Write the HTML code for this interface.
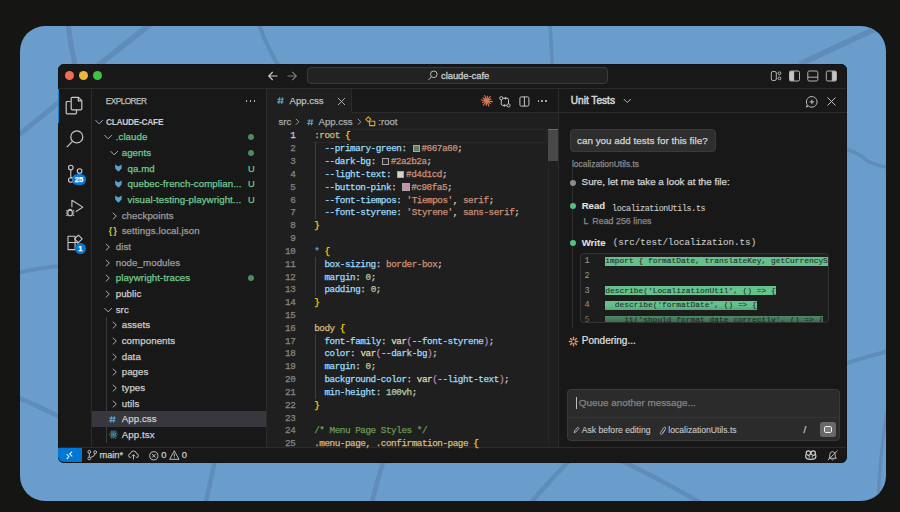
<!DOCTYPE html><html><head><meta charset="utf-8"><style>*{box-sizing:border-box;margin:0;padding:0}
html,body{width:900px;height:512px;overflow:hidden;background:#151513;font-family:"Liberation Sans",sans-serif;color:#cccccc;position:relative}
.a{position:absolute;white-space:pre;-webkit-text-stroke:0.25px currentColor}
svg{position:absolute;overflow:visible}
.m{font-family:"Liberation Mono",monospace}
.sel{color:#d7ba7d}.br{color:#ffd700}.pr{color:#9cdcfe}.st{color:#ce9178}.nu{color:#b5cea8}.fn{color:#dcdcaa}.pa{color:#c586c0}.kw{color:#569cd6}.cm{color:#6a9955}.pu{color:#cccccc}
</style></head><body>
<div class="a" style="left:20px;top:26px;width:865.5px;height:474.5px;border-radius:25px;background:#6a9ccc;overflow:hidden"><svg width="866" height="475" style="left:0;top:0" fill="none" stroke="#5f8cb9" stroke-linecap="butt"><g transform="translate(-20 -26)"><path d="M67.5 20 Q70.5 45 76 70" stroke-width="5"/><path d="M160 16.5 L92 70.4" stroke-width="5.5"/><path d="M64 98.1 L14 139" stroke-width="5"/><path d="M257.5 20 Q265 44 281 70" stroke-width="4"/><path d="M550 20 Q551 45 552.5 70" stroke-width="3.5"/><path d="M890 22 L800 64" stroke-width="5.5"/><path d="M14 274 Q36 268 62 266" stroke-width="4"/><path d="M14 396 Q36 405 62 418" stroke-width="4.5"/><path d="M216 456 L205 506" stroke-width="4.5"/><path d="M385 456 Q378 478 371 506" stroke-width="4.5"/><path d="M574 456 Q552 478 528 506" stroke-width="4.5"/><path d="M612 456 Q662 480 706 506" stroke-width="4.5"/><path d="M842 148 Q858 152 866 160 Q876 166 892 168" stroke-width="3.5"/><path d="M842 364.5 Q866 357 892 350" stroke-width="4"/><path d="M887 412 Q880 450 878 505" stroke-width="3"/></g></svg></div>
<div class="a" style="left:58px;top:64px;width:789px;height:398.5px;border-radius:6px;background:#181818;overflow:hidden"></div>
<div class="a" style="left:267px;top:89px;width:291px;height:358px;background:#1f1f1f"></div>
<div class="a" style="left:58px;top:88px;width:789px;height:1px;background:#2b2b2b"></div>
<div class="a" style="left:91px;top:89px;width:1px;height:358px;background:#2b2b2b"></div>
<div class="a" style="left:266px;top:89px;width:1px;height:358px;background:#2b2b2b"></div>
<div class="a" style="left:558px;top:89px;width:1px;height:358px;background:#2b2b2b"></div>
<div class="a" style="left:58px;top:447px;width:789px;height:1px;background:#2b2b2b"></div>
<div class="a" style="left:58px;top:64px;width:789px;height:398.5px;border-radius:6px;border:1px solid #131313"></div>
<div class="a" style="left:64.9px;top:71.2px;width:9px;height:9px;border-radius:50%;background:#ef6e54"></div>
<div class="a" style="left:79.2px;top:71.2px;width:9px;height:9px;border-radius:50%;background:#efb63b"></div>
<div class="a" style="left:93.2px;top:71.2px;width:9px;height:9px;border-radius:50%;background:#3ec245"></div>
<svg style="left:268px;top:71px" width="10" height="10" fill="none" stroke="#cccccc" stroke-width="1.1"><path d="M9.5 5H0.7M4.7 1L0.7 5L4.7 9"/></svg>
<svg style="left:286.5px;top:71px" width="10" height="10" fill="none" stroke="#7a7a7a" stroke-width="1.1"><path d="M0.5 5H9.3M5.3 1L9.3 5L5.3 9"/></svg>
<div class="a" style="left:306.5px;top:67px;width:301.5px;height:17px;border-radius:4px;background:#222222;border:1px solid #3a3a3a"></div>
<svg style="left:428px;top:70px" width="10" height="11" fill="none" stroke="#bbbbbb" stroke-width="1"><circle cx="5.8" cy="4.3" r="3.3"/><path d="M3.4 6.8L0.6 9.9"/></svg>
<div class="a" style="left:441px;top:69.20px;height:14px;line-height:14px;font-size:9.45px;color:#cccccc;font-weight:normal;font-family:'Liberation Sans';-webkit-text-stroke:0.3px #cccccc;letter-spacing:-0.05px;">claude-cafe</div>
<svg style="left:770px;top:70px" width="70" height="12" fill="none" stroke="#c5c5c5" stroke-width="0.9"><rect x="1.3" y="1.5" width="5" height="9" rx="1.5"/><circle cx="9.5" cy="3.3" r="1.4"/><circle cx="9.5" cy="8.3" r="1.4"/><rect x="19.5" y="1" width="10" height="10" rx="1.5"/><rect x="19.8" y="1.3" width="4" height="9.4" fill="#c5c5c5" stroke="none"/><path d="M23.7 1V11"/><rect x="37.8" y="1" width="10" height="10" rx="1.5"/><path d="M37.8 7.2H47.8"/><rect x="56.3" y="1" width="10" height="10" rx="1.5"/><rect x="62.3" y="1.3" width="4" height="9.4" fill="#c5c5c5" stroke="none"/><path d="M62.3 1V11"/></svg>
<div class="a" style="left:58px;top:88.6px;width:1.1px;height:34px;background:#1a7fd0"></div>
<svg style="left:65px;top:96px" width="20" height="20" fill="none" stroke="#c8c8c8" stroke-width="1.2" stroke-linejoin="round"><path d="M5.5 5.5H2.2Q1.2 5.5 1.2 6.5V16.8Q1.2 17.8 2.2 17.8H10.5Q11.5 17.8 11.5 16.8V13.8"/><path d="M6.2 2.3Q6.2 1.3 7.2 1.3H13.5L16.8 4.6V12.8Q16.8 13.8 15.8 13.8H7.2Q6.2 13.8 6.2 12.8Z"/><path d="M13.3 1.3V4.8H16.8"/></svg>
<svg style="left:65px;top:129px" width="20" height="20" fill="none" stroke="#c8c8c8" stroke-width="1.2"><circle cx="11.8" cy="7.9" r="6"/><path d="M7.5 12.3L1.8 18.2"/></svg>
<svg style="left:65.7px;top:163.3px" width="20" height="20" fill="none" stroke="#c8c8c8" stroke-width="1.1"><circle cx="4.8" cy="4.6" r="2.3"/><circle cx="13.6" cy="8" r="2.3"/><circle cx="4.8" cy="17" r="2.3"/><path d="M4.8 6.9V14.7M13.6 10.3Q13.6 13 9 14Q5.5 14.6 4.8 14.8"/></svg>
<div class="a" style="left:71.8px;top:173.8px;width:14.2px;height:11.4px;border-radius:5.7px;background:#0b7ad6;color:#fff;font-size:7.6px;font-weight:bold;text-align:center;line-height:11.4px">25</div>
<svg style="left:65px;top:197.8px" width="20" height="20" fill="none" stroke="#c8c8c8" stroke-width="1.1" stroke-linejoin="round"><path d="M6.9 9.3V2.3L17.8 9.1L10.7 13.7"/><ellipse cx="5.1" cy="15" rx="2.3" ry="2.8"/><path d="M3.2 12.3Q5.1 10.2 7 12.3M1.1 12.5L2.8 13.3M0.9 15H2.7M1.1 17.6L2.8 16.7M9.1 12.5L7.4 13.3M9.3 15H7.5M9.1 17.6L7.4 16.7"/></svg>
<svg style="left:65px;top:232px" width="20" height="20" fill="none" stroke="#c8c8c8" stroke-width="1.1" stroke-linejoin="round"><path d="M3 4.2H10.1V17.6H3ZM3 10.5H10.1M10.1 10.5H13V17.6H10.1"/><path d="M13.4 3.1L17.2 6.9L13.4 10.7L9.6 6.9Z"/></svg>
<div class="a" style="left:74.8px;top:242.5px;width:11px;height:11px;border-radius:50%;background:#0078d4;color:#fff;font-size:7.5px;font-weight:bold;text-align:center;line-height:11px">1</div>
<div class="a" style="left:105.7px;top:94.30px;height:14px;line-height:14px;font-size:8.3px;color:#bdbdbd;font-weight:normal;font-family:'Liberation Sans';letter-spacing:-0.55px;">EXPLORER</div>
<div class="a" style="left:245.6px;top:100.2px;width:1.8px;height:1.8px;border-radius:50%;background:#d0d0d0"></div>
<div class="a" style="left:249.6px;top:100.2px;width:1.8px;height:1.8px;border-radius:50%;background:#d0d0d0"></div>
<div class="a" style="left:253.6px;top:100.2px;width:1.8px;height:1.8px;border-radius:50%;background:#d0d0d0"></div>
<div class="a" style="left:106px;top:114.50px;height:14px;line-height:14px;font-size:8.4px;color:#cccccc;font-weight:bold;font-family:'Liberation Sans';-webkit-text-stroke:0.05px currentColor;letter-spacing:-0.3px;">CLAUDE-CAFE</div>
<svg style="left:94.5px;top:117.50px" width="9" height="8" fill="none" stroke="#c5c5c5" stroke-width="0.85"><path d="M0.5 2.1L4.2 5.8L7.9 2.1"/></svg>
<div class="a" style="left:115.7px;top:130.17px;height:14px;line-height:14px;font-size:9.7px;color:#73c991;font-weight:normal;font-family:'Liberation Sans';letter-spacing:0.08px;">.claude</div>
<svg style="left:104px;top:133.17px" width="9" height="8" fill="none" stroke="#c5c5c5" stroke-width="0.85"><path d="M0.5 2.1L4.2 5.8L7.9 2.1"/></svg>
<div class="a" style="left:248.1px;top:134.17px;width:6px;height:6px;border-radius:50%;background:#4f8a60"></div>
<div class="a" style="left:121.7px;top:145.84px;height:14px;line-height:14px;font-size:9.7px;color:#73c991;font-weight:normal;font-family:'Liberation Sans';letter-spacing:0.08px;">agents</div>
<svg style="left:109.8px;top:148.84px" width="9" height="8" fill="none" stroke="#c5c5c5" stroke-width="0.85"><path d="M0.5 2.1L4.2 5.8L7.9 2.1"/></svg>
<div class="a" style="left:248.1px;top:149.84px;width:6px;height:6px;border-radius:50%;background:#4f8a60"></div>
<div class="a" style="left:127.5px;top:161.51px;height:14px;line-height:14px;font-size:9.7px;color:#73c991;font-weight:normal;font-family:'Liberation Sans';letter-spacing:0.08px;">qa.md</div>
<svg style="left:115.2px;top:164.11px" width="8" height="8" fill="#5aa3cf"><path d="M0.2 0.4L3.4 2.6L6.6 0.4V4.4L3.4 7.8L0.2 4.4Z"/></svg>
<div class="a" style="left:248px;top:161.51px;height:14px;line-height:14px;font-size:9.3px;color:#73c991;font-weight:normal;font-family:'Liberation Sans';">U</div>
<div class="a" style="left:127.5px;top:177.18px;height:14px;line-height:14px;font-size:9.7px;color:#73c991;font-weight:normal;font-family:'Liberation Sans';letter-spacing:0.08px;">quebec-french-complian...</div>
<svg style="left:115.2px;top:179.78px" width="8" height="8" fill="#5aa3cf"><path d="M0.2 0.4L3.4 2.6L6.6 0.4V4.4L3.4 7.8L0.2 4.4Z"/></svg>
<div class="a" style="left:248px;top:177.18px;height:14px;line-height:14px;font-size:9.3px;color:#73c991;font-weight:normal;font-family:'Liberation Sans';">U</div>
<div class="a" style="left:127.5px;top:192.85px;height:14px;line-height:14px;font-size:9.7px;color:#73c991;font-weight:normal;font-family:'Liberation Sans';letter-spacing:0.08px;">visual-testing-playwright...</div>
<svg style="left:115.2px;top:195.45px" width="8" height="8" fill="#5aa3cf"><path d="M0.2 0.4L3.4 2.6L6.6 0.4V4.4L3.4 7.8L0.2 4.4Z"/></svg>
<div class="a" style="left:248px;top:192.85px;height:14px;line-height:14px;font-size:9.3px;color:#73c991;font-weight:normal;font-family:'Liberation Sans';">U</div>
<div class="a" style="left:121.7px;top:208.52px;height:14px;line-height:14px;font-size:9.7px;color:#9d9d9d;font-weight:normal;font-family:'Liberation Sans';letter-spacing:0.08px;">checkpoints</div>
<svg style="left:110.6px;top:211.52px" width="8" height="8" fill="none" stroke="#c5c5c5" stroke-width="0.85"><path d="M1.8 0.8L5.3 4.1L1.8 7.4"/></svg>
<div class="a" style="left:121.7px;top:224.19px;height:14px;line-height:14px;font-size:9.7px;color:#9d9d9d;font-weight:normal;font-family:'Liberation Sans';letter-spacing:0.08px;">settings.local.json</div>
<div class="a" style="left:108.8px;top:224.19px;height:14px;line-height:14px;font-size:8.5px;color:#cbcb41;font-weight:bold;font-family:'Liberation Sans';-webkit-text-stroke:0.05px currentColor;letter-spacing:-0.5px;">{ }</div>
<div class="a" style="left:115.7px;top:239.86px;height:14px;line-height:14px;font-size:9.7px;color:#9d9d9d;font-weight:normal;font-family:'Liberation Sans';letter-spacing:0.08px;">dist</div>
<svg style="left:104px;top:242.86px" width="8" height="8" fill="none" stroke="#c5c5c5" stroke-width="0.85"><path d="M1.8 0.8L5.3 4.1L1.8 7.4"/></svg>
<div class="a" style="left:115.7px;top:255.53px;height:14px;line-height:14px;font-size:9.7px;color:#9d9d9d;font-weight:normal;font-family:'Liberation Sans';letter-spacing:0.08px;">node_modules</div>
<svg style="left:104px;top:258.53px" width="8" height="8" fill="none" stroke="#c5c5c5" stroke-width="0.85"><path d="M1.8 0.8L5.3 4.1L1.8 7.4"/></svg>
<div class="a" style="left:115.7px;top:271.20px;height:14px;line-height:14px;font-size:9.7px;color:#73c991;font-weight:normal;font-family:'Liberation Sans';letter-spacing:0.08px;">playwright-traces</div>
<svg style="left:104px;top:274.20px" width="8" height="8" fill="none" stroke="#c5c5c5" stroke-width="0.85"><path d="M1.8 0.8L5.3 4.1L1.8 7.4"/></svg>
<div class="a" style="left:248.1px;top:275.20px;width:6px;height:6px;border-radius:50%;background:#4f8a60"></div>
<div class="a" style="left:115.7px;top:286.87px;height:14px;line-height:14px;font-size:9.7px;color:#cccccc;font-weight:normal;font-family:'Liberation Sans';letter-spacing:0.08px;">public</div>
<svg style="left:104px;top:289.87px" width="8" height="8" fill="none" stroke="#c5c5c5" stroke-width="0.85"><path d="M1.8 0.8L5.3 4.1L1.8 7.4"/></svg>
<div class="a" style="left:115.7px;top:302.54px;height:14px;line-height:14px;font-size:9.7px;color:#cccccc;font-weight:normal;font-family:'Liberation Sans';letter-spacing:0.08px;">src</div>
<svg style="left:104px;top:305.54px" width="9" height="8" fill="none" stroke="#c5c5c5" stroke-width="0.85"><path d="M0.5 2.1L4.2 5.8L7.9 2.1"/></svg>
<div class="a" style="left:121.7px;top:318.21px;height:14px;line-height:14px;font-size:9.7px;color:#cccccc;font-weight:normal;font-family:'Liberation Sans';letter-spacing:0.08px;">assets</div>
<svg style="left:110.5px;top:321.21px" width="8" height="8" fill="none" stroke="#c5c5c5" stroke-width="0.85"><path d="M1.8 0.8L5.3 4.1L1.8 7.4"/></svg>
<div class="a" style="left:121.7px;top:333.88px;height:14px;line-height:14px;font-size:9.7px;color:#cccccc;font-weight:normal;font-family:'Liberation Sans';letter-spacing:0.08px;">components</div>
<svg style="left:110.5px;top:336.88px" width="8" height="8" fill="none" stroke="#c5c5c5" stroke-width="0.85"><path d="M1.8 0.8L5.3 4.1L1.8 7.4"/></svg>
<div class="a" style="left:121.7px;top:349.55px;height:14px;line-height:14px;font-size:9.7px;color:#cccccc;font-weight:normal;font-family:'Liberation Sans';letter-spacing:0.08px;">data</div>
<svg style="left:110.5px;top:352.55px" width="8" height="8" fill="none" stroke="#c5c5c5" stroke-width="0.85"><path d="M1.8 0.8L5.3 4.1L1.8 7.4"/></svg>
<div class="a" style="left:121.7px;top:365.22px;height:14px;line-height:14px;font-size:9.7px;color:#cccccc;font-weight:normal;font-family:'Liberation Sans';letter-spacing:0.08px;">pages</div>
<svg style="left:110.5px;top:368.22px" width="8" height="8" fill="none" stroke="#c5c5c5" stroke-width="0.85"><path d="M1.8 0.8L5.3 4.1L1.8 7.4"/></svg>
<div class="a" style="left:121.7px;top:380.89px;height:14px;line-height:14px;font-size:9.7px;color:#cccccc;font-weight:normal;font-family:'Liberation Sans';letter-spacing:0.08px;">types</div>
<svg style="left:110.5px;top:383.89px" width="8" height="8" fill="none" stroke="#c5c5c5" stroke-width="0.85"><path d="M1.8 0.8L5.3 4.1L1.8 7.4"/></svg>
<div class="a" style="left:121.7px;top:396.56px;height:14px;line-height:14px;font-size:9.7px;color:#cccccc;font-weight:normal;font-family:'Liberation Sans';letter-spacing:0.08px;">utils</div>
<svg style="left:110.5px;top:399.56px" width="8" height="8" fill="none" stroke="#c5c5c5" stroke-width="0.85"><path d="M1.8 0.8L5.3 4.1L1.8 7.4"/></svg>
<div class="a" style="left:92px;top:411.33px;width:174px;height:15.8px;background:#37373d"></div>
<div class="a" style="left:121.7px;top:412.23px;height:14px;line-height:14px;font-size:9.7px;color:#cccccc;font-weight:normal;font-family:'Liberation Sans';letter-spacing:0.08px;">App.css</div>
<svg style="left:109.3px;top:415.83000000000004px" width="6.8" height="6.8" fill="none" stroke="#5aa3cf" stroke-width="1.15"><g transform="scale(0.971)"><path d="M2.6 0.3L1.7 6.8M5.5 0.3L4.6 6.8M0.4 2.2H6.8M0.1 4.8H6.5"/></g></svg>
<div class="a" style="left:121.7px;top:427.90px;height:14px;line-height:14px;font-size:9.7px;color:#cccccc;font-weight:normal;font-family:'Liberation Sans';letter-spacing:0.08px;">App.tsx</div>
<svg style="left:108.5px;top:430.40px" width="9" height="9" fill="none" stroke="#519aba" stroke-width="0.6"><ellipse cx="4.5" cy="4.5" rx="4.2" ry="1.6"/><ellipse cx="4.5" cy="4.5" rx="4.2" ry="1.6" transform="rotate(60 4.5 4.5)"/><ellipse cx="4.5" cy="4.5" rx="4.2" ry="1.6" transform="rotate(-60 4.5 4.5)"/><circle cx="4.5" cy="4.5" r="0.8" fill="#519aba"/></svg>
<div class="a" style="left:105.7px;top:317.38px;width:1px;height:125.36px;background:#3a3a3a"></div>
<div class="a" style="left:267px;top:89px;width:291px;height:24px;background:#181818;border-bottom:1px solid #2b2b2b"></div>
<div class="a" style="left:267px;top:89px;width:85px;height:24px;background:#1f1f1f;border-right:1px solid #2b2b2b"></div>
<svg style="left:277.4px;top:97.1px" width="7" height="7" fill="none" stroke="#5aa3cf" stroke-width="1.15"><g transform="scale(1.000)"><path d="M2.6 0.3L1.7 6.8M5.5 0.3L4.6 6.8M0.4 2.2H6.8M0.1 4.8H6.5"/></g></svg>
<div class="a" style="left:289.5px;top:93.90px;height:14px;line-height:14px;font-size:9.6px;color:#bdbdbd;font-weight:normal;font-family:'Liberation Sans';">App.css</div>
<svg style="left:337px;top:97px" width="9" height="9" fill="none" stroke="#bdbdbd" stroke-width="0.9"><path d="M1 1L8 8M8 1L1 8"/></svg>
<svg style="left:480.7px;top:95.2px" width="12" height="12" fill="none" stroke="#d97757" stroke-width="1.15" stroke-linecap="round"><path d="M6.99 5.97L11.35 6.58M6.75 6.54L9.42 8.63M6.25 6.91L7.90 10.99M5.63 6.99L5.16 10.36M5.06 6.75L2.35 10.21M4.69 6.25L1.53 7.52M4.61 5.63L0.25 5.02M4.85 5.06L2.18 2.97M5.35 4.69L3.70 0.61M5.97 4.61L6.44 1.24M6.54 4.85L9.25 1.39M6.91 5.35L10.07 4.08"/><circle cx="5.8" cy="5.8" r="1.6" fill="#d97757" stroke="none"/></svg>
<svg style="left:497px;top:94px" width="16" height="16" fill="none" stroke="#c5c5c5" stroke-width="1"><circle cx="4.3" cy="4.2" r="1.6"/><circle cx="11.5" cy="11.4" r="1.6"/><path d="M4.3 5.8V10Q4.3 11.4 5.7 11.4H9.9"/><path d="M11.5 9.8V5.6Q11.5 4.2 10.1 4.2H5.9"/><path d="M8.5 2.7L9.6 4.2L8.5 5.7L7.4 4.2Z M7.3 9.9L8.4 11.4L7.3 12.9L6.2 11.4Z" fill="#c5c5c5" stroke="none"/></svg>
<svg style="left:518.5px;top:96px" width="11" height="11" fill="none" stroke="#c5c5c5" stroke-width="1"><rect x="0.9" y="0.9" width="9" height="9.2" rx="1.3"/><path d="M5.4 0.9V10.1"/></svg>
<div class="a" style="left:537.6px;top:100.4px;width:1.8px;height:1.8px;border-radius:50%;background:#d0d0d0"></div>
<div class="a" style="left:541.4px;top:100.4px;width:1.8px;height:1.8px;border-radius:50%;background:#d0d0d0"></div>
<div class="a" style="left:545.2px;top:100.4px;width:1.8px;height:1.8px;border-radius:50%;background:#d0d0d0"></div>
<div class="a" style="left:278.5px;top:114.80px;height:14px;line-height:14px;font-size:9.6px;color:#a9a9a9;font-weight:normal;font-family:'Liberation Sans';">src</div>
<svg style="left:293.5px;top:118px" width="7" height="8" fill="none" stroke="#a9a9a9" stroke-width="0.9"><path d="M1.8 0.8L4.8 3.8L1.8 6.8"/></svg>
<svg style="left:307.1px;top:118.6px" width="6.5" height="6.5" fill="none" stroke="#5aa3cf" stroke-width="1.15"><g transform="scale(0.929)"><path d="M2.6 0.3L1.7 6.8M5.5 0.3L4.6 6.8M0.4 2.2H6.8M0.1 4.8H6.5"/></g></svg>
<div class="a" style="left:318.5px;top:114.80px;height:14px;line-height:14px;font-size:9.6px;color:#a9a9a9;font-weight:normal;font-family:'Liberation Sans';">App.css</div>
<svg style="left:355.5px;top:118px" width="7" height="8" fill="none" stroke="#a9a9a9" stroke-width="0.9"><path d="M1.8 0.8L4.8 3.8L1.8 6.8"/></svg>
<svg style="left:364.5px;top:115.5px" width="12" height="12" fill="none" stroke="#e0a030" stroke-width="1.1" stroke-linejoin="round"><path d="M3.3 0.9L5.8 3.4L3.3 5.9L0.8 3.4Z"/><path d="M4.6 4.7V9.6H9.8V5.2H5.5"/></svg>
<div class="a" style="left:378.3px;top:114.80px;height:14px;line-height:14px;font-size:9.6px;color:#a9a9a9;font-weight:normal;font-family:'Liberation Sans';">:root</div>
<div class="a" style="left:313px;top:128.79px;width:234px;height:13.82px;border:1px solid #282828;border-left:none"></div>
<div class="a m" style="left:265.3px;top:130.49px;width:30px;text-align:right;font-size:9.30px;letter-spacing:-0.450px;line-height:12.82px;height:12.82px;color:#cccccc">1</div>
<div class="a m" style="left:314.2px;top:130.49px;font-size:9.30px;letter-spacing:-0.450px;line-height:12.82px;height:12.82px;color:#cccccc"><span class="sel">:root</span><span class="pu"> </span><span class="br">{</span></div>
<div class="a m" style="left:265.3px;top:143.31px;width:30px;text-align:right;font-size:9.30px;letter-spacing:-0.450px;line-height:12.82px;height:12.82px;color:#858585">2</div>
<div class="a" style="left:412.67px;top:144.92px;width:7.2px;height:7.2px;border:1px solid #a8a8a8;background:#667a60"></div>
<div class="a m" style="left:314.2px;top:143.31px;font-size:9.30px;letter-spacing:-0.450px;line-height:12.82px;height:12.82px;color:#cccccc"><span class="pu">  </span><span class="pr">--primary-green</span><span class="pu">: </span><span style="display:inline-block;width:9.75px"></span><span class="st">#667a60</span><span class="pu">;</span></div>
<div class="a m" style="left:265.3px;top:156.13px;width:30px;text-align:right;font-size:9.30px;letter-spacing:-0.450px;line-height:12.82px;height:12.82px;color:#858585">3</div>
<div class="a" style="left:381.89px;top:157.74px;width:7.2px;height:7.2px;border:1px solid #a8a8a8;background:#2a2b2a"></div>
<div class="a m" style="left:314.2px;top:156.13px;font-size:9.30px;letter-spacing:-0.450px;line-height:12.82px;height:12.82px;color:#cccccc"><span class="pu">  </span><span class="pr">--dark-bg</span><span class="pu">: </span><span style="display:inline-block;width:9.75px"></span><span class="st">#2a2b2a</span><span class="pu">;</span></div>
<div class="a m" style="left:265.3px;top:168.95px;width:30px;text-align:right;font-size:9.30px;letter-spacing:-0.450px;line-height:12.82px;height:12.82px;color:#858585">4</div>
<div class="a" style="left:397.28px;top:170.56px;width:7.2px;height:7.2px;border:1px solid #a8a8a8;background:#d4d1cd"></div>
<div class="a m" style="left:314.2px;top:168.95px;font-size:9.30px;letter-spacing:-0.450px;line-height:12.82px;height:12.82px;color:#cccccc"><span class="pu">  </span><span class="pr">--light-text</span><span class="pu">: </span><span style="display:inline-block;width:9.75px"></span><span class="st">#d4d1cd</span><span class="pu">;</span></div>
<div class="a m" style="left:265.3px;top:181.77px;width:30px;text-align:right;font-size:9.30px;letter-spacing:-0.450px;line-height:12.82px;height:12.82px;color:#858585">5</div>
<div class="a" style="left:402.41px;top:183.38px;width:7.2px;height:7.2px;border:1px solid #a8a8a8;background:#c98fa5"></div>
<div class="a m" style="left:314.2px;top:181.77px;font-size:9.30px;letter-spacing:-0.450px;line-height:12.82px;height:12.82px;color:#cccccc"><span class="pu">  </span><span class="pr">--button-pink</span><span class="pu">: </span><span style="display:inline-block;width:9.75px"></span><span class="st">#c98fa5</span><span class="pu">;</span></div>
<div class="a m" style="left:265.3px;top:194.59px;width:30px;text-align:right;font-size:9.30px;letter-spacing:-0.450px;line-height:12.82px;height:12.82px;color:#858585">6</div>
<div class="a m" style="left:314.2px;top:194.59px;font-size:9.30px;letter-spacing:-0.450px;line-height:12.82px;height:12.82px;color:#cccccc"><span class="pu">  </span><span class="pr">--font-tiempos</span><span class="pu">: </span><span class="st">&#x27;Tiempos&#x27;</span><span class="pu">, </span><span class="st">serif</span><span class="pu">;</span></div>
<div class="a m" style="left:265.3px;top:207.41px;width:30px;text-align:right;font-size:9.30px;letter-spacing:-0.450px;line-height:12.82px;height:12.82px;color:#858585">7</div>
<div class="a m" style="left:314.2px;top:207.41px;font-size:9.30px;letter-spacing:-0.450px;line-height:12.82px;height:12.82px;color:#cccccc"><span class="pu">  </span><span class="pr">--font-styrene</span><span class="pu">: </span><span class="st">&#x27;Styrene&#x27;</span><span class="pu">, </span><span class="st">sans-serif</span><span class="pu">;</span></div>
<div class="a m" style="left:265.3px;top:220.23px;width:30px;text-align:right;font-size:9.30px;letter-spacing:-0.450px;line-height:12.82px;height:12.82px;color:#858585">8</div>
<div class="a m" style="left:314.2px;top:220.23px;font-size:9.30px;letter-spacing:-0.450px;line-height:12.82px;height:12.82px;color:#cccccc"><span class="br">}</span></div>
<div class="a m" style="left:265.3px;top:233.05px;width:30px;text-align:right;font-size:9.30px;letter-spacing:-0.450px;line-height:12.82px;height:12.82px;color:#858585">9</div>
<div class="a m" style="left:314.2px;top:233.05px;font-size:9.30px;letter-spacing:-0.450px;line-height:12.82px;height:12.82px;color:#cccccc"></div>
<div class="a m" style="left:265.3px;top:245.87px;width:30px;text-align:right;font-size:9.30px;letter-spacing:-0.450px;line-height:12.82px;height:12.82px;color:#858585">10</div>
<div class="a m" style="left:314.2px;top:245.87px;font-size:9.30px;letter-spacing:-0.450px;line-height:12.82px;height:12.82px;color:#cccccc"><span class="kw">*</span><span class="pu"> </span><span class="br">{</span></div>
<div class="a m" style="left:265.3px;top:258.69px;width:30px;text-align:right;font-size:9.30px;letter-spacing:-0.450px;line-height:12.82px;height:12.82px;color:#858585">11</div>
<div class="a m" style="left:314.2px;top:258.69px;font-size:9.30px;letter-spacing:-0.450px;line-height:12.82px;height:12.82px;color:#cccccc"><span class="pu">  </span><span class="pr">box-sizing</span><span class="pu">: </span><span class="st">border-box</span><span class="pu">;</span></div>
<div class="a m" style="left:265.3px;top:271.51px;width:30px;text-align:right;font-size:9.30px;letter-spacing:-0.450px;line-height:12.82px;height:12.82px;color:#858585">12</div>
<div class="a m" style="left:314.2px;top:271.51px;font-size:9.30px;letter-spacing:-0.450px;line-height:12.82px;height:12.82px;color:#cccccc"><span class="pu">  </span><span class="pr">margin</span><span class="pu">: </span><span class="nu">0</span><span class="pu">;</span></div>
<div class="a m" style="left:265.3px;top:284.33px;width:30px;text-align:right;font-size:9.30px;letter-spacing:-0.450px;line-height:12.82px;height:12.82px;color:#858585">13</div>
<div class="a m" style="left:314.2px;top:284.33px;font-size:9.30px;letter-spacing:-0.450px;line-height:12.82px;height:12.82px;color:#cccccc"><span class="pu">  </span><span class="pr">padding</span><span class="pu">: </span><span class="nu">0</span><span class="pu">;</span></div>
<div class="a m" style="left:265.3px;top:297.15px;width:30px;text-align:right;font-size:9.30px;letter-spacing:-0.450px;line-height:12.82px;height:12.82px;color:#858585">14</div>
<div class="a m" style="left:314.2px;top:297.15px;font-size:9.30px;letter-spacing:-0.450px;line-height:12.82px;height:12.82px;color:#cccccc"><span class="br">}</span></div>
<div class="a m" style="left:265.3px;top:309.97px;width:30px;text-align:right;font-size:9.30px;letter-spacing:-0.450px;line-height:12.82px;height:12.82px;color:#858585">15</div>
<div class="a m" style="left:314.2px;top:309.97px;font-size:9.30px;letter-spacing:-0.450px;line-height:12.82px;height:12.82px;color:#cccccc"></div>
<div class="a m" style="left:265.3px;top:322.79px;width:30px;text-align:right;font-size:9.30px;letter-spacing:-0.450px;line-height:12.82px;height:12.82px;color:#858585">16</div>
<div class="a m" style="left:314.2px;top:322.79px;font-size:9.30px;letter-spacing:-0.450px;line-height:12.82px;height:12.82px;color:#cccccc"><span class="sel">body</span><span class="pu"> </span><span class="br">{</span></div>
<div class="a m" style="left:265.3px;top:335.61px;width:30px;text-align:right;font-size:9.30px;letter-spacing:-0.450px;line-height:12.82px;height:12.82px;color:#858585">17</div>
<div class="a m" style="left:314.2px;top:335.61px;font-size:9.30px;letter-spacing:-0.450px;line-height:12.82px;height:12.82px;color:#cccccc"><span class="pu">  </span><span class="pr">font-family</span><span class="pu">: </span><span class="fn">var</span><span class="pa">(</span><span class="pr">--font-styrene</span><span class="pa">)</span><span class="pu">;</span></div>
<div class="a m" style="left:265.3px;top:348.43px;width:30px;text-align:right;font-size:9.30px;letter-spacing:-0.450px;line-height:12.82px;height:12.82px;color:#858585">18</div>
<div class="a m" style="left:314.2px;top:348.43px;font-size:9.30px;letter-spacing:-0.450px;line-height:12.82px;height:12.82px;color:#cccccc"><span class="pu">  </span><span class="pr">color</span><span class="pu">: </span><span class="fn">var</span><span class="pa">(</span><span class="pr">--dark-bg</span><span class="pa">)</span><span class="pu">;</span></div>
<div class="a m" style="left:265.3px;top:361.25px;width:30px;text-align:right;font-size:9.30px;letter-spacing:-0.450px;line-height:12.82px;height:12.82px;color:#858585">19</div>
<div class="a m" style="left:314.2px;top:361.25px;font-size:9.30px;letter-spacing:-0.450px;line-height:12.82px;height:12.82px;color:#cccccc"><span class="pu">  </span><span class="pr">margin</span><span class="pu">: </span><span class="nu">0</span><span class="pu">;</span></div>
<div class="a m" style="left:265.3px;top:374.07px;width:30px;text-align:right;font-size:9.30px;letter-spacing:-0.450px;line-height:12.82px;height:12.82px;color:#858585">20</div>
<div class="a m" style="left:314.2px;top:374.07px;font-size:9.30px;letter-spacing:-0.450px;line-height:12.82px;height:12.82px;color:#cccccc"><span class="pu">  </span><span class="pr">background-color</span><span class="pu">: </span><span class="fn">var</span><span class="pa">(</span><span class="pr">--light-text</span><span class="pa">)</span><span class="pu">;</span></div>
<div class="a m" style="left:265.3px;top:386.89px;width:30px;text-align:right;font-size:9.30px;letter-spacing:-0.450px;line-height:12.82px;height:12.82px;color:#858585">21</div>
<div class="a m" style="left:314.2px;top:386.89px;font-size:9.30px;letter-spacing:-0.450px;line-height:12.82px;height:12.82px;color:#cccccc"><span class="pu">  </span><span class="pr">min-height</span><span class="pu">: </span><span class="nu">100vh</span><span class="pu">;</span></div>
<div class="a m" style="left:265.3px;top:399.71px;width:30px;text-align:right;font-size:9.30px;letter-spacing:-0.450px;line-height:12.82px;height:12.82px;color:#858585">22</div>
<div class="a m" style="left:314.2px;top:399.71px;font-size:9.30px;letter-spacing:-0.450px;line-height:12.82px;height:12.82px;color:#cccccc"><span class="br">}</span></div>
<div class="a m" style="left:265.3px;top:412.53px;width:30px;text-align:right;font-size:9.30px;letter-spacing:-0.450px;line-height:12.82px;height:12.82px;color:#858585">23</div>
<div class="a m" style="left:314.2px;top:412.53px;font-size:9.30px;letter-spacing:-0.450px;line-height:12.82px;height:12.82px;color:#cccccc"></div>
<div class="a m" style="left:265.3px;top:425.35px;width:30px;text-align:right;font-size:9.30px;letter-spacing:-0.450px;line-height:12.82px;height:12.82px;color:#858585">24</div>
<div class="a m" style="left:314.2px;top:425.35px;font-size:9.30px;letter-spacing:-0.450px;line-height:12.82px;height:12.82px;color:#cccccc"><span class="cm">/* Menu Page Styles */</span></div>
<div class="a m" style="left:265.3px;top:438.17px;width:30px;text-align:right;font-size:9.30px;letter-spacing:-0.450px;line-height:12.82px;height:12.82px;color:#858585">25</div>
<div class="a m" style="left:314.2px;top:438.17px;font-size:9.30px;letter-spacing:-0.450px;line-height:12.82px;height:12.82px;color:#cccccc"><span class="sel">.menu-page, .confirmation-page</span><span class="pu"> </span><span class="br">{</span></div>
<div class="a" style="left:314.70px;top:142.11px;width:1px;height:76.92px;background:#404040"></div>
<div class="a" style="left:314.70px;top:257.49px;width:1px;height:38.46px;background:#404040"></div>
<div class="a" style="left:314.70px;top:334.41px;width:1px;height:64.10px;background:#404040"></div>
<div class="a" style="left:547.5px;top:161px;width:1px;height:286px;background:#262626"></div>
<div class="a" style="left:547.5px;top:129px;width:10.5px;height:32.3px;background:#484848;border-top:1.5px solid #6a6a6a"></div>
<div class="a" style="left:559px;top:112px;width:288px;height:1px;background:#2b2b2b"></div>
<div class="a" style="left:570.8px;top:93.60px;height:14px;line-height:14px;font-size:10.1px;color:#d4d4d4;font-weight:normal;font-family:'Liberation Sans';-webkit-text-stroke:0.5px #d4d4d4;">Unit Tests</div>
<svg style="left:622.5px;top:97.5px" width="9" height="6" fill="none" stroke="#c5c5c5" stroke-width="0.9"><path d="M0.8 1L4.3 4.5L7.8 1"/></svg>
<svg style="left:805px;top:94.5px" width="14" height="14" fill="none" stroke="#c5c5c5" stroke-width="1"><path d="M3.3 10.9A5.3 5.3 0 1 0 2.2 9.6L1.6 12.2Z"/><path d="M6.9 4.6V9.2M4.6 6.9H9.2"/></svg>
<svg style="left:827.3px;top:97px" width="9" height="9" fill="none" stroke="#c5c5c5" stroke-width="1"><path d="M0.5 0.5L8.5 8.5M8.5 0.5L0.5 8.5"/></svg>
<div class="a" style="left:570px;top:129.3px;width:146px;height:22.5px;border-radius:4px;background:#2e2e2e;border:1px solid #3b3b3b"></div>
<div class="a" style="left:577px;top:133.50px;height:14px;line-height:14px;font-size:9.9px;color:#d4d4d4;font-weight:normal;font-family:'Liberation Sans';">can you add tests for this file?</div>
<div class="a" style="left:572px;top:156.50px;height:14px;line-height:14px;font-size:8.45px;color:#8a8a8a;font-weight:normal;font-family:'Liberation Sans';">localizationUtils.ts</div>
<div class="a" style="left:572.3px;top:168px;width:1px;height:160px;background:#2f2f2f"></div>
<div class="a" style="left:569.5px;top:179.7px;width:6px;height:6px;border-radius:50%;background:#8c8c8c"></div>
<div class="a" style="left:581.6px;top:175.40px;height:14px;line-height:14px;font-size:9.8px;color:#d4d4d4;font-weight:normal;font-family:'Liberation Sans';">Sure, let me take a look at the file:</div>
<div class="a" style="left:569.7px;top:203.2px;width:6.2px;height:6.2px;border-radius:50%;background:#53c27f"></div>
<div class="a" style="left:581.7px;top:199.40px;height:14px;line-height:14px;font-size:9.6px;color:#e0e0e0;font-weight:bold;font-family:'Liberation Sans';-webkit-text-stroke:0.05px currentColor;">Read</div>
<div class="a" style="left:612.1px;top:201.80px;height:14px;line-height:14px;font-size:8.4px;color:#cccccc;font-weight:normal;font-family:'Liberation Mono';-webkit-text-stroke:0.1px #cccccc;letter-spacing:-0.37px;">localizationUtils.ts</div>
<div class="a" style="left:583.5px;top:213.60px;height:14px;line-height:14px;font-size:8.8px;color:#8a8a8a;font-weight:normal;font-family:'Liberation Sans';">L</div>
<div class="a" style="left:592.3px;top:213.60px;height:14px;line-height:14px;font-size:8.9px;color:#8a8a8a;font-weight:normal;font-family:'Liberation Sans';">Read 256 lines</div>
<div class="a" style="left:569.7px;top:239.7px;width:6.2px;height:6.2px;border-radius:50%;background:#53c27f"></div>
<div class="a" style="left:581.7px;top:235.80px;height:14px;line-height:14px;font-size:9.6px;color:#e0e0e0;font-weight:bold;font-family:'Liberation Sans';-webkit-text-stroke:0.05px currentColor;">Write</div>
<div class="a" style="left:612.8px;top:236.20px;height:14px;line-height:14px;font-size:9.2px;color:#cccccc;font-weight:normal;font-family:'Liberation Mono';-webkit-text-stroke:0.1px #cccccc;">(src/test/localization.ts)</div>
<div class="a" style="left:580.3px;top:253.1px;width:249px;height:69.9px;border-radius:4px;background:#1c1d1c;overflow:hidden"><div class="a" style="left:24.50px;top:3.45px;width:224.2px;height:9.3px;background:#66c28c"></div><div class="a m" style="left:4.20px;top:1.10px;height:14px;line-height:14px;font-size:8.6px;color:#9a9a9a;-webkit-text-stroke:0">1</div><div class="a m" style="left:25.00px;top:1.10px;height:14px;line-height:14px;font-size:7.90px;color:#22302a;-webkit-text-stroke:0.1px #22302a">import { formatDate, translateKey, getCurrencyS</div><div class="a m" style="left:4.20px;top:15.85px;height:14px;line-height:14px;font-size:8.6px;color:#9a9a9a;-webkit-text-stroke:0">2</div><div class="a" style="left:24.50px;top:32.95px;width:171.2px;height:9.3px;background:#66c28c"></div><div class="a m" style="left:4.20px;top:30.60px;height:14px;line-height:14px;font-size:8.6px;color:#9a9a9a;-webkit-text-stroke:0">3</div><div class="a m" style="left:25.00px;top:30.60px;height:14px;line-height:14px;font-size:7.90px;color:#22302a;-webkit-text-stroke:0.1px #22302a">describe(&#x27;LocalizationUtil&#x27;, () =&gt; {</div><div class="a" style="left:24.50px;top:47.70px;width:152.2px;height:9.3px;background:#66c28c"></div><div class="a m" style="left:4.20px;top:45.35px;height:14px;line-height:14px;font-size:8.6px;color:#9a9a9a;-webkit-text-stroke:0">4</div><div class="a m" style="left:25.00px;top:45.35px;height:14px;line-height:14px;font-size:7.90px;color:#22302a;-webkit-text-stroke:0.1px #22302a">  describe(&#x27;formatDate&#x27;, () =&gt; {</div><div class="a" style="left:24.50px;top:62.45px;width:218.2px;height:9.3px;background:#66c28c"></div><div class="a m" style="left:4.20px;top:60.10px;height:14px;line-height:14px;font-size:8.6px;color:#9a9a9a;-webkit-text-stroke:0">5</div><div class="a m" style="left:25.00px;top:60.10px;height:14px;line-height:14px;font-size:7.90px;color:#22302a;-webkit-text-stroke:0.1px #22302a">    it(&#x27;should format date correctly&#x27;, () =&gt; {</div><div class="a" style="left:0;top:52px;width:249px;height:18px;background:linear-gradient(to bottom, rgba(27,27,27,0), rgba(27,27,27,0.55))"></div></div>
<div class="a" style="left:580.3px;top:253.1px;width:249px;height:69.9px;border-radius:4px;border:1px solid #343434"></div>
<svg style="left:568.6px;top:336.6px" width="9" height="9" fill="none" stroke="#e08a64" stroke-width="1.5" stroke-linecap="round"><path d="M6.60 4.50L8.70 4.50M5.98 5.98L7.47 7.47M4.50 6.60L4.50 8.70M3.02 5.98L1.53 7.47M2.40 4.50L0.30 4.50M3.02 3.02L1.53 1.53M4.50 2.40L4.50 0.30M5.98 3.02L7.47 1.53"/></svg>
<div class="a" style="left:581.8px;top:333.50px;height:14px;line-height:14px;font-size:10px;color:#e2e2e2;font-weight:normal;font-family:'Liberation Sans';-webkit-text-stroke:0.2px #e2e2e2;">Pondering...</div>
<div class="a" style="left:566.7px;top:389px;width:273.3px;height:52px;border-radius:4px;background:#2b2b2b;border:1px solid #3a3a3a"></div>
<div class="a" style="left:567.5px;top:417px;width:272px;height:1px;background:#353535"></div>
<div class="a" style="left:576px;top:396.5px;width:1.4px;height:12.5px;background:#c0c0c0"></div>
<div class="a" style="left:578.8px;top:396.30px;height:14px;line-height:14px;font-size:9.9px;color:#858585;font-weight:normal;font-family:'Liberation Sans';">Queue another message...</div>
<svg style="left:572.5px;top:426px" width="7" height="8" fill="none" stroke="#bbbbbb" stroke-width="0.9"><path d="M1.2 6.8L1.6 4.8L4.8 1.2L6 2.4L2.8 6Z"/></svg>
<div class="a" style="left:581.7px;top:423.00px;height:14px;line-height:14px;font-size:8.6px;color:#c8c8c8;font-weight:normal;font-family:'Liberation Sans';-webkit-text-stroke:0.1px #c8c8c8;">Ask before editing</div>
<svg style="left:658.5px;top:425.5px" width="8" height="10" fill="none" stroke="#bbbbbb" stroke-width="0.9" stroke-linecap="round"><path d="M5.8 4.2L3.6 7.6Q2.8 8.8 1.8 8.2Q0.8 7.6 1.6 6.4L4.6 1.8Q5.4 0.7 6.3 1.3Q7.2 1.9 6.4 3.1L3.8 7"/></svg>
<div class="a" style="left:668.3px;top:423.00px;height:14px;line-height:14px;font-size:8.6px;color:#c8c8c8;font-weight:normal;font-family:'Liberation Sans';-webkit-text-stroke:0.1px #c8c8c8;">localizationUtils.ts</div>
<div class="a" style="left:803.6px;top:422.80px;height:14px;line-height:14px;font-size:9.5px;color:#c8c8c8;font-weight:normal;font-family:'Liberation Sans';">/</div>
<div class="a" style="left:820.2px;top:421.6px;width:15.6px;height:15.4px;border-radius:2.5px;background:#686868"></div>
<div class="a" style="left:824.3px;top:425.8px;width:7.6px;height:7.2px;border-radius:1.8px;border:1.4px solid #f0f0f0;background:#7a7a7a"></div>
<div class="a" style="left:58px;top:448px;width:23.7px;height:14.3px;background:#0078d4;border-bottom-left-radius:6px"></div>
<svg style="left:64px;top:450.5px" width="11" height="10" fill="none" stroke="#e8f2fb" stroke-width="1.1"><path d="M2.6 3L4.8 5.5L2.8 8.1M8 0.8L5.6 3L8.3 5.3"/></svg>
<svg style="left:86.5px;top:449px" width="10" height="12" fill="none" stroke="#cccccc" stroke-width="0.9"><circle cx="2.3" cy="2.8" r="1.4"/><circle cx="2.3" cy="9.4" r="1.4"/><circle cx="8.2" cy="3.2" r="1.4"/><path d="M2.3 4.2V8M8.2 4.6Q8.2 7 3.5 8.6"/></svg>
<div class="a" style="left:99.4px;top:448.30px;height:14px;line-height:14px;font-size:9.3px;color:#cccccc;font-weight:normal;font-family:'Liberation Sans';">main*</div>
<svg style="left:127.5px;top:450px" width="11" height="10" fill="none" stroke="#cccccc" stroke-width="0.9"><path d="M3 7.5H2.5Q0.6 7.5 0.6 5.5Q0.6 3.8 2.4 3.6Q2.9 1 5.5 1Q8.1 1 8.5 3.6Q10.4 3.8 10.4 5.6Q10.4 7.5 8.5 7.5H8"/><path d="M5.5 9.5V4.8M3.8 6.4L5.5 4.7L7.2 6.4"/></svg>
<svg style="left:148.5px;top:450.5px" width="10" height="10" fill="none" stroke="#cccccc" stroke-width="0.9"><circle cx="4.8" cy="4.8" r="4.1"/><path d="M3 3L6.6 6.6M6.6 3L3 6.6"/></svg>
<div class="a" style="left:161.3px;top:448.30px;height:14px;line-height:14px;font-size:9.3px;color:#cccccc;font-weight:normal;font-family:'Liberation Sans';">0</div>
<svg style="left:168.5px;top:450px" width="11" height="10" fill="none" stroke="#cccccc" stroke-width="0.9" stroke-linejoin="round"><path d="M5.3 0.8L10 9.3H0.6Z"/><path d="M5.3 3.6V6.5M5.3 7.4V8.1"/></svg>
<div class="a" style="left:181.8px;top:448.30px;height:14px;line-height:14px;font-size:9.3px;color:#cccccc;font-weight:normal;font-family:'Liberation Sans';">0</div>
<svg style="left:805px;top:449.5px" width="12" height="11" fill="none" stroke="#d0d0d0" stroke-width="1.2"><circle cx="3.4" cy="3.1" r="2.2"/><circle cx="8.2" cy="3.1" r="2.2"/><path d="M1.2 4.3Q0.6 5.2 0.7 6.6Q1 9.3 5.8 9.3Q10.6 9.3 10.9 6.6Q11 5.2 10.4 4.3"/><path d="M4.3 6.2V7.4M7.3 6.2V7.4" stroke-width="1.3"/></svg>
<svg style="left:826.5px;top:449.5px" width="12" height="11" fill="none" stroke="#c8c8c8" stroke-width="0.9"><path d="M2 8.3H9.3L8.3 7V4.8Q8.3 2 5.5 1.6Q2.7 2 2.7 4.8V7Z"/><path d="M4.5 9.5Q5.5 10.5 6.5 9.5"/><path d="M0.8 10.2L10.6 0.6"/></svg>
</body></html>
